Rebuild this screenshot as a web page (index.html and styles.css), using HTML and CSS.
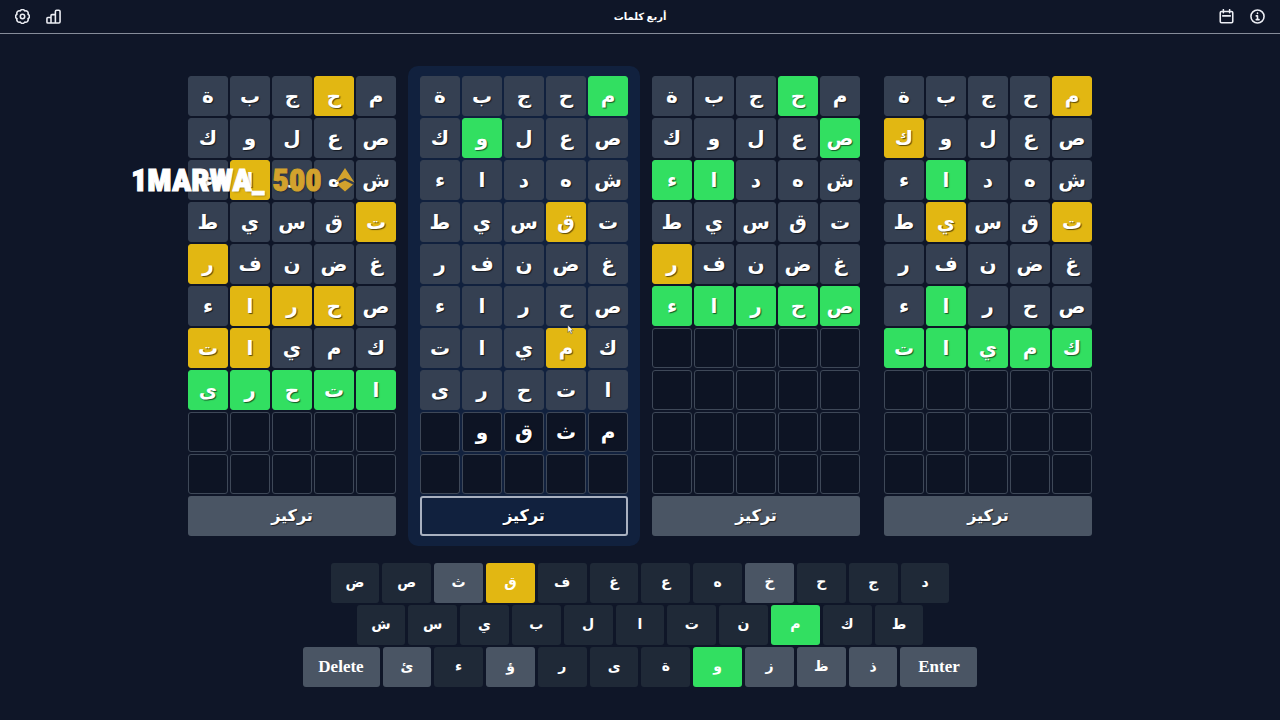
FILE: index.html
```html
<!DOCTYPE html>
<html lang="ar">
<head>
<meta charset="utf-8">
<meta name="viewport" content="width=device-width, initial-scale=1">
<title>أربع كلمات</title>
<link rel="stylesheet" href="styles.css">
</head>
<body>
<header class="topbar">
  <div class="topbar-group">
    <button class="icon-button" type="button" aria-label="الإعدادات">
      <svg class="icon" viewBox="0 0 24 24"><path d="M8.400 3.200A4 4 0 0 1 15.600 3.200A4 4 0 0 1 20.800 8.400A4 4 0 0 1 20.800 15.600A4 4 0 0 1 15.600 20.800A4 4 0 0 1 8.400 20.800A4 4 0 0 1 3.200 15.600A4 4 0 0 1 3.200 8.400A4 4 0 0 1 8.400 3.200z"/><circle cx="12" cy="12" r="3.500"/></svg>
    </button>
    <button class="icon-button" type="button" aria-label="الإحصائيات">
      <svg class="icon" viewBox="0 0 24 24"><path d="M8 22.500H3A1.500 1.500 0 0 1 1.500 21v-6A1.500 1.500 0 0 1 3 13.500h5M15 22.500H8v-12A1.500 1.500 0 0 1 9.500 9H15M15 22.500V4a2 2 0 0 1 2-2h3.500a2 2 0 0 1 2 2v16.500a2 2 0 0 1-2 2z"/></svg>
    </button>
  </div>
  <h1 class="title" dir="rtl">أربع كلمات</h1>
  <div class="topbar-group">
    <button class="icon-button" type="button" aria-label="الأرشيف">
      <svg class="icon" viewBox="0 0 24 24"><rect x="2" y="4" width="20" height="18" rx="2"/><path d="M7 1v5M17 1v5M6 11h12"/></svg>
    </button>
    <button class="icon-button" type="button" aria-label="المساعدة">
      <svg class="icon" viewBox="0 0 24 24"><circle cx="12" cy="12" r="10.500"/><path d="M10 11h2v6M10 17h4.500M12 6.500v.5"/></svg>
    </button>
  </div>
</header>
<main class="game">
  <div class="boards" id="boards">
    <div class="alert">
      <span>1MARWA_</span>
      <span class="alert-amount">500</span>
      <svg class="alert-gem" viewBox="0 0 20 24"><path d="M10 0l9.500 14.500L10 10 .5 14.500z"/><path d="M10 12.500l8 4L10 23.500l-8-7z"/></svg>
    </div>
  </div>
  <div class="keyboard" id="keyboard"></div>
</main>
<svg class="pointer" viewBox="0 0 8 12"><path d="M1 1v8.500l2-2 1.500 3.500 1.500-.7L4.500 7H7z"/></svg>
<script src="game.js"></script>
</body>
</html>
```

FILE: styles.css
```css
* {
  box-sizing: border-box;
}

body {
  margin: 0;
  min-height: 100vh;
  display: flex;
  flex-direction: column;
  background: #0f1628;
  color: #fff;
  font-family: "Liberation Serif", "DejaVu Sans", serif;
  font-weight: 700;
}

button {
  font: inherit;
  color: inherit;
  border: 0;
  padding: 0;
  cursor: pointer;
}

.topbar {
  display: flex;
  align-items: center;
  justify-content: space-between;
  height: 34px;
  padding: 0 15px;
  border-bottom: 1px solid #868c9a;
}

.topbar-group {
  display: flex;
  gap: 16px;
}

.icon-button {
  display: flex;
  background: none;
}

.icon {
  width: 15px;
  height: 15px;
  fill: none;
  stroke: #eceef4;
  stroke-width: 2.5;
  stroke-linejoin: round;
  stroke-linecap: round;
}

.title {
  margin: 0;
  font-size: 10px;
  line-height: 16px;
}

.game {
  flex: 1;
  display: flex;
  flex-direction: column;
  align-items: center;
  justify-content: center;
  gap: 17px;
  padding-bottom: 1px;
}

.boards {
  position: relative;
  display: grid;
  grid-template-columns: repeat(4, 1fr);
  width: 100%;
  max-width: 928px;
}

.board {
  display: flex;
  flex-direction: column;
  gap: 2px;
  padding: 10px 12px;
  border-radius: 10px;
}

.board-focused {
  background: #11213e;
}

.tiles {
  display: grid;
  grid-template-columns: repeat(5, 1fr);
  gap: 2px;
  direction: rtl;
}

.tile {
  height: 40px;
  border: 1px solid #3e4858;
  border-radius: 3px;
  background: #0d1424;
  font-size: 20px;
  line-height: 38px;
  text-align: center;
  text-shadow: 1px 1px 1px rgba(0, 0, 0, 0.6);
}

.absent {
  background: #354052;
  border-color: #354052;
}

.present {
  background: #e2b712;
  border-color: #e2b712;
}

.correct {
  background: #32df61;
  border-color: #32df61;
}

.focus-button {
  height: 40px;
  border-radius: 3px;
  background: #4a5564;
  font-size: 16px;
  line-height: 34px;
  text-shadow: 1px 1px 1px rgba(0, 0, 0, 0.6);
}

.board-focused .focus-button {
  background: #11213e;
  border: 2px solid #a9b1c0;
}

.keyboard {
  display: flex;
  flex-direction: column;
  gap: 2px;
  width: 100%;
  max-width: 675px;
}

.key-row {
  display: flex;
  gap: 3px;
}

.key-row:nth-child(1) {
  padding: 0 28px;
}

.key-row:nth-child(2) {
  padding: 0 54px;
}

.key {
  flex: 1;
  height: 40px;
  border-radius: 3px;
  background: #1f2937;
  font-size: 14px;
  line-height: 38px;
}

.key-unused {
  background: #4a5564;
}

.key-present {
  background: #e2b712;
}

.key-correct {
  background: #32df61;
}

.key-wide {
  flex: 0 0 77px;
  background: #4a5564;
  font-size: 17px;
}

.alert {
  position: absolute;
  left: -45px;
  top: 96px;
  display: flex;
  align-items: center;
  font-family: "Roboto Condensed", "Liberation Sans Narrow", Roboto, sans-serif;
  font-size: 32px;
  font-weight: 900;
  line-height: 36px;
  -webkit-text-stroke: 1px currentColor;
  text-shadow: 1px 1px 2px rgba(0, 0, 0, 0.4);
}

.alert-amount {
  margin: 0 13px 0 8px;
  color: #d2a22d;
}

.alert-gem {
  width: 20px;
  height: 24px;
  fill: #d2a22d;
}

.pointer {
  position: absolute;
  left: 567px;
  top: 324px;
  width: 7px;
  height: 11px;
  fill: #fff;
  stroke: #303846;
  stroke-width: 0.5;
}
```

FILE: game.js
```js
const guesses = ["محجبة", "صعلوك", "شهداء", "تقسيط", "غضنفر", "صحراء", "كميات", "اتحرى"];

// One mark per letter in reading order: "." absent, "y" present, "g" correct.
const boards = [
  { marks: [".y...", ".....", "...y.", "y....", "....y", ".yyy.", "...yy", "ggggg"] },
  { marks: ["g....", "...g.", ".....", ".y...", ".....", ".....", ".y...", "....."], typed: "مثقو" },
  { marks: [".g...", "g....", "...gg", ".....", "....y", "ggggg"] },
  { marks: ["y....", "....y", "...g.", "y..y.", ".....", "...g.", "ggggg"] }
];

const tileClass = { ".": "absent", y: "present", g: "correct" };
const rowCount = 10;

const boardList = document.getElementById("boards");
const notice = boardList.querySelector(".alert");

for (const board of boards) {
  const section = document.createElement("section");
  section.className = "board" + (board.typed ? " board-focused" : "");
  const tiles = document.createElement("div");
  tiles.className = "tiles";
  for (let row = 0; row < rowCount; row++) {
    const marks = board.marks[row];
    const word = marks ? guesses[row] : row === board.marks.length ? board.typed || "" : "";
    for (let col = 0; col < 5; col++) {
      const tile = document.createElement("div");
      tile.className = "tile" + (marks ? " " + tileClass[marks[col]] : "");
      tile.textContent = word[col] || "";
      tiles.append(tile);
    }
  }
  const focus = document.createElement("button");
  focus.type = "button";
  focus.className = "focus-button";
  focus.textContent = "تركيز";
  section.append(tiles, focus);
  boardList.insertBefore(section, notice);
}

const keyRows = [
  ["ض", "ص", "ث", "ق", "ف", "غ", "ع", "ه", "خ", "ح", "ج", "د"],
  ["ش", "س", "ي", "ب", "ل", "ا", "ت", "ن", "م", "ك", "ط"],
  ["Delete", "ئ", "ء", "ؤ", "ر", "ى", "ة", "و", "ز", "ظ", "ذ", "Enter"]
];
const keyClass = {
  "ث": "key-unused", "خ": "key-unused", "ئ": "key-unused", "ؤ": "key-unused",
  "ز": "key-unused", "ظ": "key-unused", "ذ": "key-unused",
  "ق": "key-present", "م": "key-correct", "و": "key-correct",
  Delete: "key-wide", Enter: "key-wide"
};

for (const keys of keyRows) {
  const row = document.createElement("div");
  row.className = "key-row";
  for (const label of keys) {
    const key = document.createElement("button");
    key.type = "button";
    key.className = "key " + (keyClass[label] || "");
    key.textContent = label;
    row.append(key);
  }
  document.getElementById("keyboard").append(row);
}
```
